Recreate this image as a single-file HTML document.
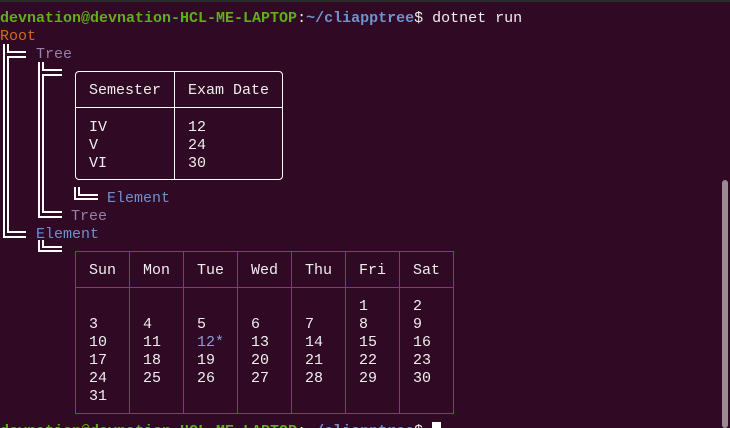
<!DOCTYPE html>
<html><head><style>
html,body{margin:0;width:730px;height:428px;overflow:hidden}
body{background:#300a24;position:relative;font-family:"Liberation Mono","DejaVu Sans Mono",monospace;font-size:15px;color:#eeeeec}
.t{position:absolute;line-height:18px;white-space:pre}
.l{position:absolute;background:#fff}
.tree{color:#9a7fa8}.el{color:#6f8fcf}
.g{color:#5fae1a;font-weight:bold}.b{color:#6f93d0;font-weight:bold}
.cal{position:absolute;left:75px;top:251px;width:377px;height:161px;border:1px solid #a3229f}
.cal .c{position:absolute;top:0;bottom:0;border-left:1px solid #a3229f}
</style></head><body>
<div style="position:absolute;left:0;top:0;width:730px;height:2px;background:#2b2b2b"></div>
<div class="t" style="left:0;top:10px"><span class="g">devnation@devnation-HCL-ME-LAPTOP</span>:<span class="b">~/cliapptree</span>$ dotnet run</div>
<div class="t" style="left:0;top:28px;color:#d0691f">Root</div>
<div class="l" style="left:3px;top:44px;width:2px;height:194px"></div>
<div class="l" style="left:7px;top:44px;width:2px;height:9px"></div>
<div class="l" style="left:7px;top:56px;width:2px;height:177px"></div>
<div class="l" style="left:7px;top:51px;width:19px;height:2px"></div>
<div class="l" style="left:7px;top:56px;width:19px;height:2px"></div>
<div class="l" style="left:7px;top:231px;width:19px;height:2px"></div>
<div class="l" style="left:3px;top:236px;width:23px;height:2px"></div>
<div class="t tree" style="left:36px;top:46px">Tree</div>
<div class="l" style="left:38px;top:62px;width:2px;height:156px"></div>
<div class="l" style="left:42px;top:62px;width:2px;height:9px"></div>
<div class="l" style="left:42px;top:74px;width:2px;height:139px"></div>
<div class="l" style="left:42px;top:69px;width:20px;height:2px"></div>
<div class="l" style="left:42px;top:74px;width:20px;height:2px"></div>
<div class="l" style="left:42px;top:211px;width:20px;height:2px"></div>
<div class="l" style="left:38px;top:216px;width:24px;height:2px"></div>
<div style="position:absolute;left:75px;top:71px;width:206px;height:107px;border:1px solid #fff;border-radius:4px"></div>
<div style="position:absolute;left:174px;top:72px;width:1px;height:107px;background:#fff"></div>
<div style="position:absolute;left:75px;top:107px;width:208px;height:1px;background:#fff"></div>
<div class="t" style="left:89px;top:82px">Semester</div>
<div class="t" style="left:188px;top:82px">Exam Date</div>
<div class="t" style="left:89px;top:119px">IV
V
VI</div>
<div class="t" style="left:188px;top:119px">12
24
30</div>
<div class="l" style="left:74px;top:187px;width:2px;height:13px"></div>
<div class="l" style="left:78px;top:187px;width:2px;height:9px"></div>
<div class="l" style="left:78px;top:194px;width:20px;height:2px"></div>
<div class="l" style="left:74px;top:198px;width:24px;height:2px"></div>
<div class="t el" style="left:107px;top:190px">Element</div>
<div class="t tree" style="left:71px;top:208px">Tree</div>
<div class="t el" style="left:36px;top:226px">Element</div>
<div class="l" style="left:38px;top:240px;width:2px;height:12px"></div>
<div class="l" style="left:42px;top:240px;width:2px;height:8px"></div>
<div class="l" style="left:42px;top:246px;width:20px;height:2px"></div>
<div class="l" style="left:38px;top:250px;width:24px;height:2px"></div>
<div class="cal">
<div class="c" style="left:53px"></div><div class="c" style="left:107px"></div><div class="c" style="left:161px"></div><div class="c" style="left:215px"></div><div class="c" style="left:269px"></div><div class="c" style="left:323px"></div>
<div style="position:absolute;left:0;right:0;top:35px;border-top:1px solid #a3229f"></div>
</div>
<div class="t" style="left:89px;top:262px">Sun</div>
<div class="t" style="left:143px;top:262px">Mon</div>
<div class="t" style="left:197px;top:262px">Tue</div>
<div class="t" style="left:251px;top:262px">Wed</div>
<div class="t" style="left:305px;top:262px">Thu</div>
<div class="t" style="left:359px;top:262px">Fri</div>
<div class="t" style="left:413px;top:262px">Sat</div>
<div class="t" style="left:89px;top:298px">
3
10
17
24
31</div>
<div class="t" style="left:143px;top:298px">
4
11
18
25</div>
<div class="t" style="left:197px;top:298px">
5
<span style="color:#8a9fd8">12*</span>
19
26</div>
<div class="t" style="left:251px;top:298px">
6
13
20
27</div>
<div class="t" style="left:305px;top:298px">
7
14
21
28</div>
<div class="t" style="left:359px;top:298px">1
8
15
22
29</div>
<div class="t" style="left:413px;top:298px">2
9
16
23
30</div>
<div class="t" style="left:0;top:423px"><span class="g">devnation@devnation-HCL-ME-LAPTOP</span>:<span class="b">~/cliapptree</span>$ </div>
<div style="position:absolute;left:432px;top:422px;width:9px;height:10px;background:#fff"></div>
<div style="position:absolute;left:722px;top:180px;width:6px;height:248px;background:#9a8a94;border-radius:3px"></div>
</body></html>
